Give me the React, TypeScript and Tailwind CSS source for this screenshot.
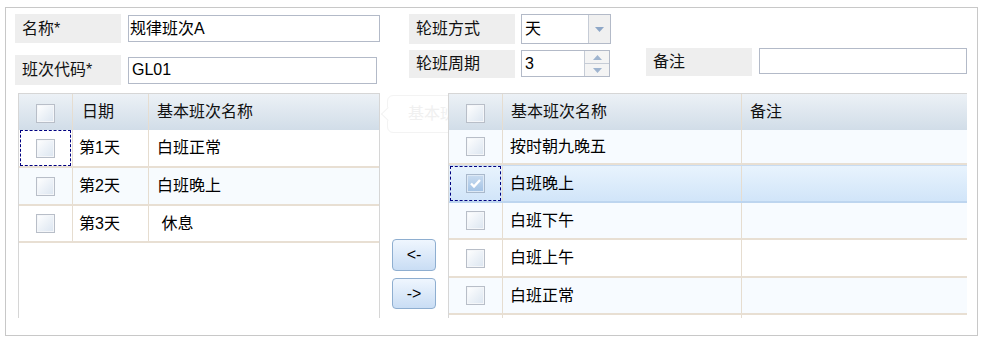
import React from 'react';

const font = "font-[family-name:Liberation_Sans,Noto_Sans_CJK_SC,sans-serif]";

function Label({ text, w = 'w-[106px]', h }: { text: string; w?: string; h: string }) {
  return (
    <div className={`${w} ${h} bg-[#eeeeee] flex items-center pl-[7px] text-[16px] text-[#111] shrink-0`}>
      {text}
    </div>
  );
}

function Check({ checked }: { checked?: boolean }) {
  if (checked) {
    return (
      <div className="w-[19px] h-[19px] border border-[#a9b9cc] bg-linear-to-b from-[#c9dcf0] to-[#a3c2e4] shadow-[inset_0_0_0_1px_#dde9f6] flex items-center justify-center">
        <svg width="13" height="11" viewBox="0 0 13 11">
          <path d="M2 5.5 L5 8.5 L11 2" fill="none" stroke="#fff" strokeWidth="2.4" />
        </svg>
      </div>
    );
  }
  return (
    <div className="w-[19px] h-[19px] border border-[#b8bec8] bg-linear-to-br from-[#ffffff] to-[#dbe5f0] shadow-[inset_0_0_0_1px_#f4f6f9]" />
  );
}

function FocusBox() {
  return <div className="absolute inset-x-[1px] inset-y-0 border border-dashed border-[#000080] pointer-events-none" />;
}

const leftRows = [
  { day: '第1天', name: '白班正常', bg: 'bg-white', focus: true },
  { day: '第2天', name: '白班晚上', bg: 'bg-[#f7fbfe]' },
  { day: '第3天', name: '\u00a0休息', bg: 'bg-white' },
];

const rightRows = [
  { name: '按时朝九晚五', h: 'h-[35px]', bg: 'bg-[#f7fbff]' },
  { name: '白班晚上', h: 'h-[38px]', bg: 'bg-linear-to-b from-[#e8f3fd] to-[#d1e5f9]', sel: true },
  { name: '白班下午', h: 'h-[37px]', bg: 'bg-[#f7fbff]' },
  { name: '白班上午', h: 'h-[38px]', bg: 'bg-white' },
  { name: '白班正常', h: 'h-[37px]', bg: 'bg-[#f7fbff]' },
];

const header = 'h-[36px] bg-linear-to-b from-[#ecf1f6] to-[#d1dde8] flex text-[16px] text-[#111]';

export default function App() {
  return (
    <div className={`w-[983px] h-[341px] bg-white pt-[7px] pl-[5px] ${font}`}>
      <div className="w-[973px] h-[329px] border border-[#c8c8c8] relative">
        {/* form */}
        <div className="h-[85px] pt-[6px] pl-[9px] flex items-start">
          <div className="flex flex-col w-[365px]">
            <div className="flex items-center h-[29px]">
              <Label text="名称*" h="h-[29px]" />
              <div className="ml-[7px] w-[252px] h-[27px] border border-[#b3bac8] flex items-center pl-[1px] text-[16px] text-black">
                规律班次A
              </div>
            </div>
            <div className="flex items-center h-[30px] mt-[12px]">
              <Label text="班次代码*" h="h-[30px]" />
              <div className="ml-[7px] w-[249px] h-[27px] border border-[#b3bac8] flex items-center pl-[3px] text-[16px] text-black">
                GL01
              </div>
            </div>
          </div>
          <div className="flex flex-col ml-[29px]">
            <div className="flex h-[30px]">
              <Label text="轮班方式" h="h-[30px]" />
              <div className="ml-[6px] w-[90px] h-[30px] border border-[#b3bac8] flex text-[16px]">
                <div className="flex-1 flex items-center pl-[3px]">天</div>
                <div className="w-[22px] border-l border-[#c6ccd6] bg-[#f0f0f0] flex items-center justify-center">
                  <svg width="9" height="5" viewBox="0 0 9 5">
                    <path d="M0 0 H9 L4.5 5 Z" fill="#8ea7c7" />
                  </svg>
                </div>
              </div>
            </div>
            <div className="flex items-start mt-[6px]">
              <Label text="轮班周期" h="h-[28px]" />
              <div className="ml-[6px] w-[89px] h-[27px] border border-[#b3bac8] flex text-[16px]">
                <div className="flex-1 flex items-center pl-[3px]">3</div>
                <div className="w-[25px] border-l border-[#c6ccd6] flex flex-col">
                  <div className="flex-1 bg-[#f4f4f4] border-b border-[#c6ccd6] flex items-center justify-center">
                    <svg width="9" height="5" viewBox="0 0 9 5">
                      <path d="M0 5 H9 L4.5 0 Z" fill="#9fb4cf" />
                    </svg>
                  </div>
                  <div className="flex-1 bg-[#f4f4f4] flex items-center justify-center">
                    <svg width="9" height="5" viewBox="0 0 9 5">
                      <path d="M0 0 H9 L4.5 5 Z" fill="#9fb4cf" />
                    </svg>
                  </div>
                </div>
              </div>
            </div>
          </div>
          <div className="flex ml-[35px] mt-[34px]">
            <Label text="备注" h="h-[28px]" />
            <div className="ml-[7px] w-[208px] h-[26px] border border-[#b3bac8]" />
          </div>
        </div>

        {/* tables */}
        <div className="h-[225px] pl-[12px] flex relative">
          {/* drag ghost */}
          <div className="absolute left-[381px] top-[2px] w-[131px] h-[38px] border border-[#f3f3f3] rounded-[6px] flex items-center pl-[20px] text-[16px] text-[#f0f0f0]">
            <div className="absolute left-[-5px] top-[13px] w-[10px] h-[10px] border-l border-b border-[#f3f3f3] rotate-45 bg-white" />
            基本班次名称
          </div>

          <div className="w-[362px] h-full border-l border-r border-t border-[#d6d6d6] relative z-10 bg-white">
            <div className={header}>
              <div className="w-[54px] border-r border-[#e6ddd0] flex items-center justify-center pt-[2px]">
                <Check />
              </div>
              <div className="w-[76px] border-r border-[#e6ddd0] flex items-center pl-[9px]">日期</div>
              <div className="flex-1 flex items-center pl-[8px]">基本班次名称</div>
            </div>
            {leftRows.map((r, i) => (
              <div
                key={r.day}
                className={`flex ${i === 2 ? 'h-[37px]' : 'h-[38px]'} ${r.bg} border-b-2 border-[#e8dfd3] text-[16px] text-black`}
              >
                <div className="w-[54px] border-r border-[#e6ddd0] flex items-center justify-center relative">
                  {r.focus && <FocusBox />}
                  <Check />
                </div>
                <div className="w-[76px] border-r border-[#e6ddd0] flex items-center pl-[6px]">{r.day}</div>
                <div className="flex-1 flex items-center pl-[8px]">{r.name}</div>
              </div>
            ))}
          </div>

          <div className="w-[68px] shrink-0 pl-[12px] pt-[146px] flex flex-col">
            <button className="w-[44px] h-[32px] rounded-[4px] border border-[#8eaed0] bg-linear-to-b from-[#eff6fe] to-[#c9ddf4] text-[16px] text-black flex items-center justify-center">
              &lt;-
            </button>
            <button className="mt-[7px] w-[44px] h-[31px] rounded-[4px] border border-[#8eaed0] bg-linear-to-b from-[#eff6fe] to-[#c9ddf4] text-[16px] text-black flex items-center justify-center">
              -&gt;
            </button>
          </div>

          <div className="w-[519px] h-full border-l border-t border-[#d6d6d6] relative z-10 bg-white flex flex-col">
            <div className={header}>
              <div className="w-[54px] border-r border-[#e6ddd0] flex items-center justify-center pt-[2px]">
                <Check />
              </div>
              <div className="w-[239px] border-r border-[#e6ddd0] flex items-center pl-[8px]">基本班次名称</div>
              <div className="flex-1 flex items-center pl-[8px]">备注</div>
            </div>
            {rightRows.map((r) => (
              <div
                key={r.name + r.h}
                className={`flex ${r.h} ${r.bg} border-b-2 ${r.sel ? 'border-[#bdd5ef] border-t border-t-[#c9dcf1]' : 'border-[#e8dfd3]'} text-[16px] text-black`}
              >
                <div className="w-[54px] border-r border-[#e6ddd0] flex items-center justify-center relative">
                  {r.sel && <FocusBox />}
                  <Check checked={r.sel} />
                </div>
                <div className="w-[239px] border-r border-[#e6ddd0] flex items-center pl-[7px]">{r.name}</div>
                <div className="flex-1" />
              </div>
            ))}
            <div className="flex flex-1">
              <div className="w-[54px] border-r border-[#e6ddd0]" />
              <div className="w-[239px] border-r border-[#e6ddd0] h-[3px]" />
            </div>
          </div>
        </div>
      </div>
    </div>
  );
}
